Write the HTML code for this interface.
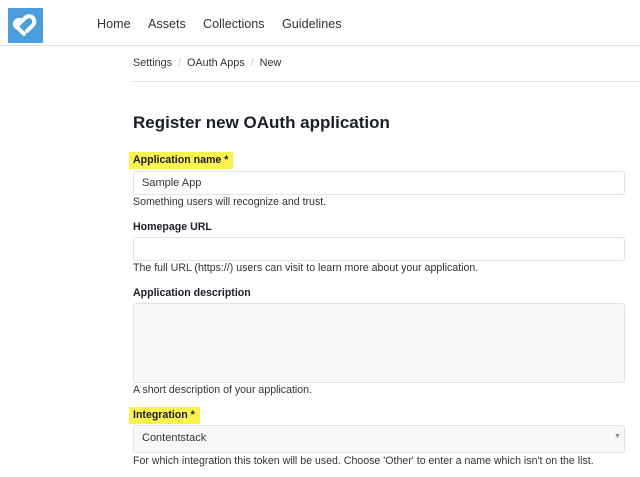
<!DOCTYPE html>
<html><head><meta charset="utf-8"><style>
body{margin:0;width:640px;height:477px;background:#fff;font-family:"Liberation Sans",sans-serif;color:#2a2f3a;position:relative;overflow:hidden}
.a{position:absolute;white-space:nowrap}
.nav{font-size:12.6px;top:17px;color:#333}
.bc{font-size:10.8px;top:57px;color:#333}
.sep{color:#ccc}
.lbl{font-size:10.6px;font-weight:bold;color:#1a1e26}
.hl{background:#fbf24e;padding:2px 5px 3px 4px;margin-left:-4px}
.inp{position:absolute;left:133px;width:490px;border:1px solid #e3e3e3;border-radius:3px;background:#fff}
.help{font-size:10.6px;color:#333}
</style></head><body>
<div class="a" style="left:8px;top:8px;width:35px;height:35px;background:#4a9edb">
<svg width="35" height="35" viewBox="0 0 35 35"><path d="M9 18 L17 10 A5 5 0 0 1 25 17 L19 23 M16 26 L10 20 A4 4 0 0 1 12 12" fill="none" stroke="#fff" stroke-width="4" stroke-linecap="round"/></svg></div>
<div class="a nav" style="left:97px">Home</div>
<div class="a nav" style="left:148px">Assets</div>
<div class="a nav" style="left:203px">Collections</div>
<div class="a nav" style="left:282px">Guidelines</div>
<div class="a" style="left:0;top:45px;width:640px;height:1px;background:#e2e2e2"></div>
<div class="a bc" style="left:133px">Settings <span class="sep">&nbsp;/&nbsp;</span> OAuth Apps <span class="sep">&nbsp;/&nbsp;</span> New</div>
<div class="a" style="left:132px;top:81px;width:508px;height:1px;background:#e2e2e2"></div>
<div class="a" style="left:133px;top:113px;font-size:17px;font-weight:bold;color:#1a1e26">Register new OAuth application</div>
<div class="a lbl" style="left:133px;top:154px"><span class="hl">Application name *</span></div>
<div class="inp" style="top:171px;height:22px"></div>
<div class="a" style="left:142px;top:177px;font-size:11px;color:#333">Sample App</div>
<div class="a help" style="left:133px;top:196px">Something users will recognize and trust.</div>
<div class="a lbl" style="left:133px;top:221px">Homepage URL</div>
<div class="inp" style="top:237px;height:22px"></div>
<div class="a help" style="left:133px;top:262px">The full URL (https://) users can visit to learn more about your application.</div>
<div class="a lbl" style="left:133px;top:287px">Application description</div>
<div class="inp" style="top:303px;height:78px;background:#f8f8f8"></div>
<div class="a help" style="left:133px;top:384px">A short description of your application.</div>
<div class="a lbl" style="left:133px;top:409px"><span class="hl">Integration *</span></div>
<div class="inp" style="top:425px;height:26px;background:#f8f8f8"></div>
<div class="a" style="left:142px;top:432px;font-size:11px;color:#333">Contentstack</div>
<div class="a" style="left:614px;top:433px;font-size:7px;color:#888">▼</div>
<div class="a help" style="left:133px;top:455px">For which integration this token will be used. Choose 'Other' to enter a name which isn't on the list.</div>
</body></html>
